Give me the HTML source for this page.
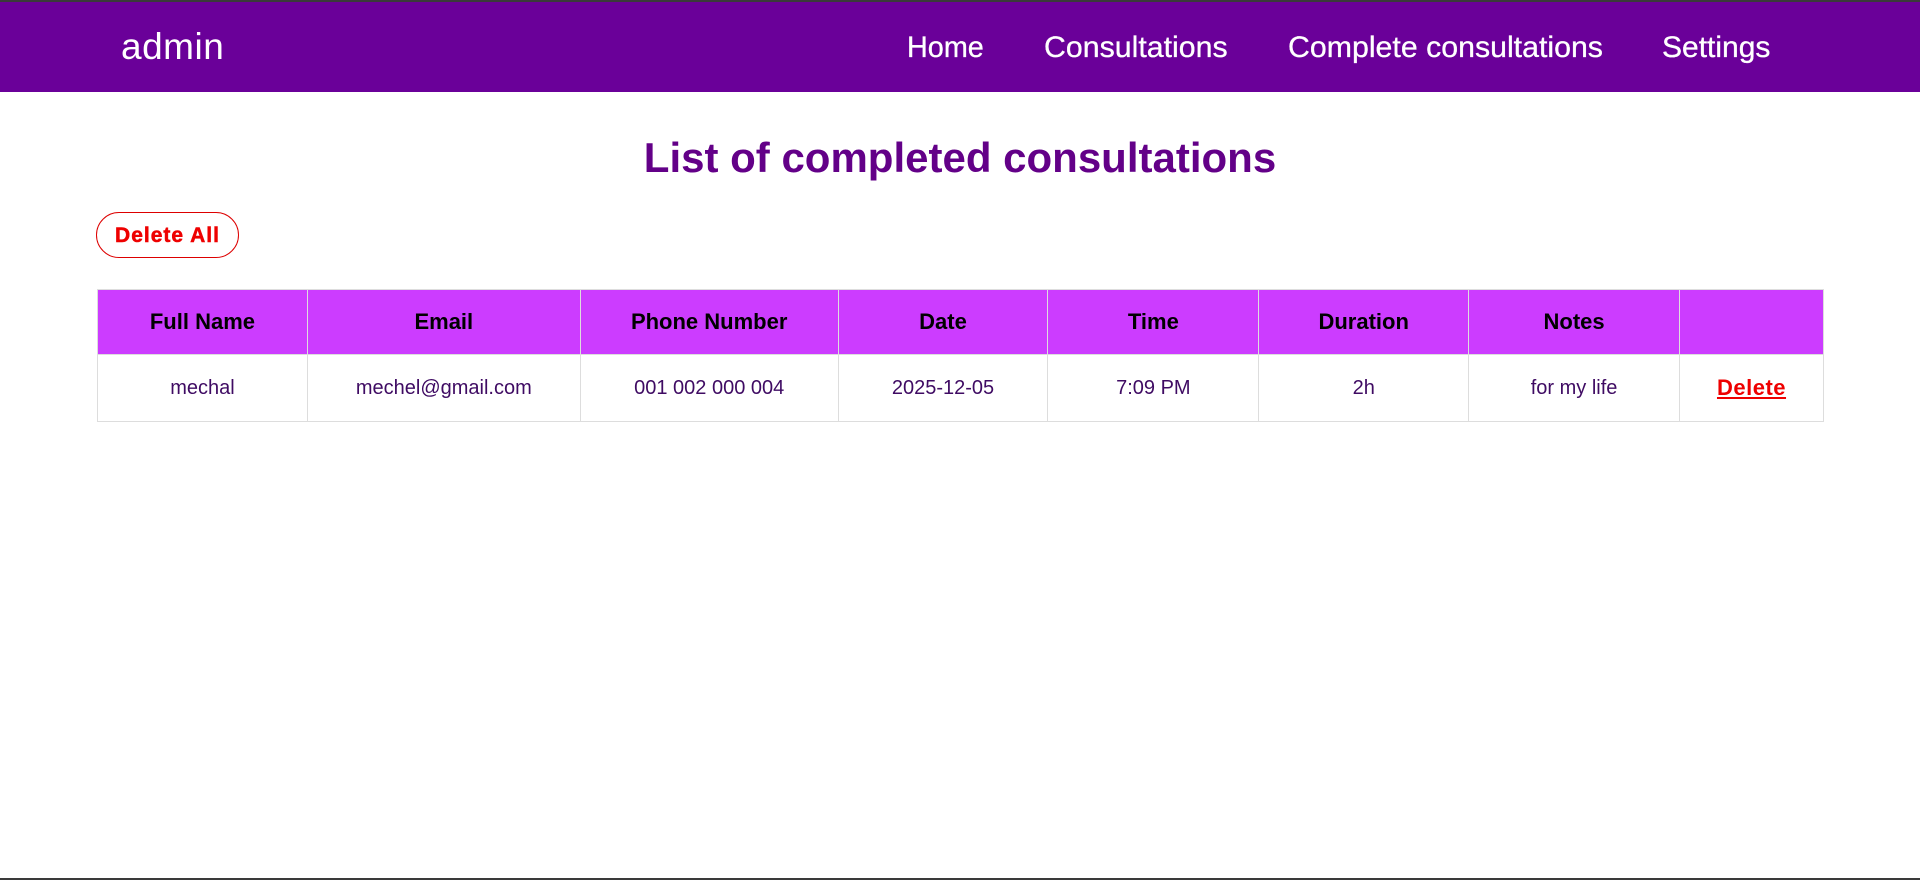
<!DOCTYPE html>
<html><head><meta charset="utf-8"><style>
*{margin:0;padding:0;box-sizing:border-box}
html,body{width:1920px;height:880px;background:#fff;overflow:hidden;font-family:"Liberation Sans",Arial,sans-serif}
.top{position:absolute;left:0;top:0;width:1920px;height:2px;background:#3a3a3a}
.bot{position:absolute;left:0;top:878px;width:1920px;height:2px;background:#3a3a3a}
header{position:absolute;left:0;top:2px;width:1920px;height:90px;background:#6a0099;color:#fff}
.logo{position:absolute;left:121px;top:24px;font-size:37px;letter-spacing:0.5px}
nav a{position:absolute;top:29px;color:#fff;text-decoration:none;font-size:30px;transform-origin:left;white-space:nowrap;-webkit-text-stroke:0.3px #fff}
h1{position:absolute;left:0;width:1920px;top:134px;text-align:center;color:#630088;font-size:42px;font-weight:bold}
.btn{position:absolute;left:96px;top:212px;width:143px;height:46px;border:1px solid #d00;border-radius:23px;color:#e00;font-weight:900;font-size:21px;text-align:center;line-height:46px;letter-spacing:1px;-webkit-text-stroke:0.5px #e00}
table{position:absolute;left:97px;top:289px;width:1727px;border-collapse:collapse}
th{background:#cc3cff;height:65px;font-size:22px;color:#000;border:1px solid #ddd}
td{height:67px;font-size:20px;color:#3f0b63;text-align:center;border:1px solid #ddd}
td a{color:#e00;font-weight:bold;text-decoration:underline;font-size:22px;letter-spacing:0.5px}
</style></head><body>
<div class="top"></div>
<header>
<div class="logo">admin</div>
<nav>
<a style="left:907px;transform:scaleX(0.96)">Home</a>
<a style="left:1044px;transform:scaleX(1.01)">Consultations</a>
<a style="left:1288px;transform:scaleX(1.01)">Complete consultations</a>
<a style="left:1662px;transform:scaleX(1.0)">Settings</a>
</nav>
</header>
<h1>List of completed consultations</h1>
<div class="btn">Delete All</div>
<table>
<colgroup><col style="width:210px"><col style="width:273px"><col style="width:258px"><col style="width:210px"><col style="width:211px"><col style="width:210px"><col style="width:211px"><col style="width:144px"></colgroup>
<tr><th>Full Name</th><th>Email</th><th>Phone Number</th><th>Date</th><th>Time</th><th>Duration</th><th>Notes</th><th></th></tr>
<tr><td>mechal</td><td>mechel@gmail.com</td><td>001 002 000 004</td><td>2025-12-05</td><td>7:09 PM</td><td>2h</td><td>for my life</td><td><a>Delete</a></td></tr>
</table>
<div class="bot"></div>
</body></html>
